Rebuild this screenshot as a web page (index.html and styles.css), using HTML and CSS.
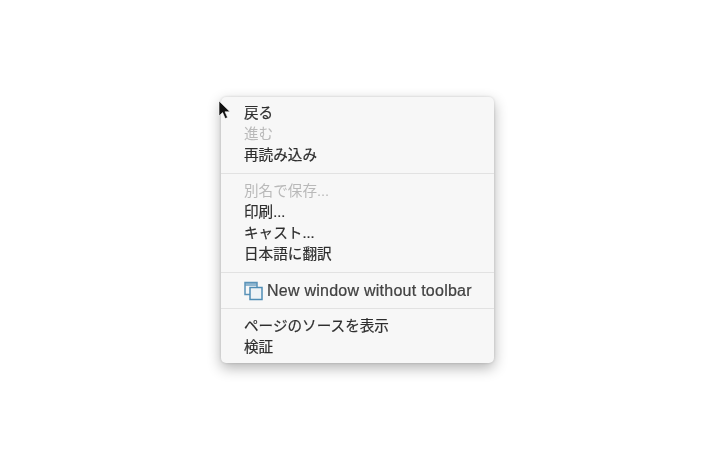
FILE: index.html
```html
<!DOCTYPE html>
<html lang="ja">
<head>
    <meta charset="UTF-8">
    <title>Context menu</title>
    <link rel="stylesheet" href="styles.css">
</head>
<body>
<div class="menu">
    <div class="menu-item">戻る</div>
    <div class="menu-item disabled">進む</div>
    <div class="menu-item">再読み込み</div>
    <div class="separator"></div>
    <div class="menu-item disabled">別名で保存...</div>
    <div class="menu-item">印刷...</div>
    <div class="menu-item">キャスト...</div>
    <div class="menu-item">日本語に翻訳</div>
    <div class="separator"></div>
    <div class="menu-item with-icon">
        <svg class="window-icon" width="20" height="20" viewBox="0 0 20 20" fill="none">
            <path d="M1 1.5h12v3.5h-12z" fill="#8fb6d0"/>
            <rect x="1" y="1.5" width="12" height="12" stroke="#5b93b8" stroke-width="1.5"/>
            <rect x="6" y="6.5" width="12" height="12" fill="#eef3f6" stroke="#4f8db5" stroke-width="1.5"/>
        </svg>
        <span>New window without toolbar</span>
    </div>
    <div class="separator"></div>
    <div class="menu-item">ページのソースを表示</div>
    <div class="menu-item">検証</div>
</div>
<svg class="cursor" width="14" height="20" viewBox="0 0 14 20">
    <path d="M1 1v15l3.6-3.4 2.6 6 2.4-1-2.6-5.8h5z" fill="#111" stroke="#fff" stroke-width="0.6"/>
</svg>
</body>
</html>
```

FILE: styles.css
```css
body {
    margin: 0;
    height: 450px;
    background-color: #fff;
    overflow: hidden;
    position: relative;
    font-family: "Liberation Sans", "Noto Sans CJK JP", sans-serif;
}

.menu {
    width: 273px;
    height: 266px;
    box-sizing: border-box;
    margin: 97px 0 0 221px;
    padding: 6px 0 0;
    background-color: #f7f7f7;
    border-radius: 5px;
    box-shadow: 0 5px 14px rgba(0, 0, 0, 0.3), 0 0 3px rgba(0, 0, 0, 0.15);
    filter: blur(0.7px);
}

.menu-item {
    height: 21px;
    line-height: 21px;
    padding-left: 23px;
    font-size: 14.6px;
    color: #2e2e2e;
    -webkit-text-stroke: 0.2px #2e2e2e;
    white-space: nowrap;
}

.menu-item.disabled {
    color: #b9b9b9;
    -webkit-text-stroke: 0;
}

.with-icon {
    display: flex;
    align-items: center;
    gap: 3px;
    font-size: 16px;
    letter-spacing: 0.25px;
    color: #444;
}

.window-icon {
    flex: none;
}

.separator {
    height: 1px;
    margin: 7px 0;
    background-color: #e2e2e2;
}

.cursor {
    position: absolute;
    left: 218px;
    top: 100px;
    filter: blur(0.5px);
}
```
